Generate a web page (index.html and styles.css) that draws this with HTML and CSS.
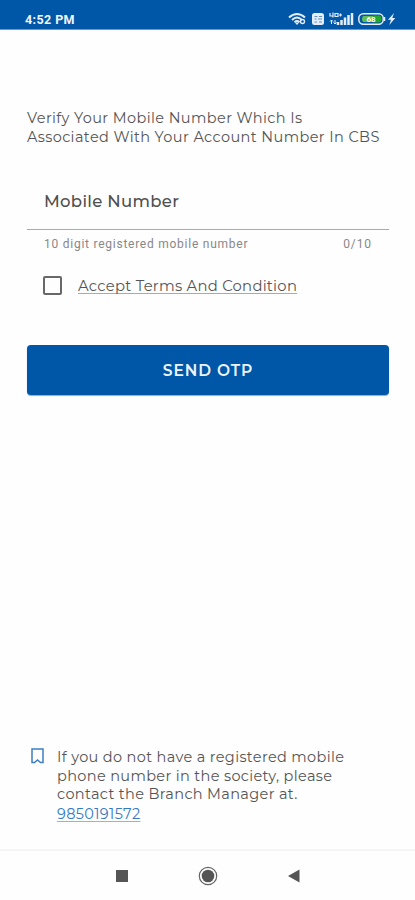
FILE: index.html
```html
<!DOCTYPE html>
<html lang="en">
<head>
<meta charset="utf-8">
<title>Verify Mobile Number</title>
<link rel="stylesheet" href="styles.css">
</head>
<body>
<header class="status">
  <span class="time">4:52 PM</span>
  <svg class="status-icons" width="110" height="16" viewBox="0 0 110 16" fill="none" stroke="#e4edf8">
    <path d="M1 6.500Q9-.5 17 6.500M4 9Q9 4 14 9M6.500 11.200Q9 9 11.500 11.200" stroke-width="1.900"/>
    <path d="M9 14l-2.200-2.500h4.400z" fill="#e4edf8" stroke="none"/>
    <circle cx="14.500" cy="10.500" r="2" stroke-width="1.300"/>
    <rect x="24" y="2" width="12" height="12" rx="2.500" fill="#e4edf8" stroke="none"/>
    <path d="M26.500 5.500h3M31 5.500h3M26.500 8h2M30 8h4M26.500 11h2.500M31 11h3" stroke="#5b8fc8" stroke-width="1.200"/>
    <path d="M42 2v3h3M45 1.500v5M47 2.500h3v3h-3zM51 4h3M52.500 2.500v3" stroke-width="1.200"/>
    <path d="M43.500 9v4M42 10.500l1.500-1.500 1.500 1.500M47 9v4M45.500 11.500l1.500 1.500 1.500-1.500" stroke-width="1"/>
    <path d="M50 14v-3M53.500 14V9M57 14V6.500M60.500 14V4M64 14V2" stroke-width="2.500"/>
    <rect x="70.800" y="2.800" width="24.400" height="10.400" rx="4.500" stroke-width="1.500"/>
    <path d="M76 5h9v6h-9q-2 0-2-3t2-3z" fill="#62bd57" stroke="none"/>
    <path d="M85 4.500h6q2.500 0 2.500 3.500T91 11.500h-6z" fill="#24a52c" stroke="none"/>
    <text x="78.500" y="11" class="battery">68</text>
    <path d="M96.500 6v4" stroke-width="1.500"/>
    <path d="M106 2l-6 6.700h3l-1.700 5.300 6-7h-3z" fill="#e4edf8" stroke="none"/>
  </svg>
</header>
<main>
  <h1 class="intro"><span>Verify Your Mobile Number Which Is</span><span>Associated With Your Account Number In CBS</span></h1>
  <div class="field"><span class="label">Mobile Number</span></div>
  <div class="helper"><span class="hint">10 digit registered mobile number</span><span class="count">0/10</span></div>
  <div class="terms"><span class="box"></span><a class="accept">Accept Terms And Condition</a></div>
  <button class="send"><span>SEND OTP</span></button>
</main>
<footer class="note">
  <svg width="13" height="16" viewBox="0 0 13 16" fill="none" stroke="#3c7fc3" stroke-width="1.500"><path d="M1 1h11v13.500H9.500L6.500 12l-3 2.500H1z"/></svg>
  <p><span>If you do not have a registered mobile</span><span>phone number in the society, please</span><span>contact the Branch Manager at.</span><a class="phone">9850191572</a></p>
</footer>
<nav class="nav">
  <svg width="20" height="20" viewBox="0 0 20 20"><path d="M4 4h12v12H4z" fill="#555"/></svg>
  <svg width="20" height="20" viewBox="0 0 20 20"><circle cx="10" cy="10" r="8.700" fill="none" stroke="#666" stroke-width="1.200"/><circle cx="10" cy="10" r="6.300" fill="#555"/></svg>
  <svg width="20" height="20" viewBox="0 0 20 20"><path d="M4 10l11.500-6.500v13z" fill="#555"/></svg>
</nav>
</body>
</html>
```
FILE: styles.css
```css
* { box-sizing: border-box; }
body { margin: 0; height: 900px; display: flex; flex-direction: column; background: #fefefe; color: #555; font-family: Montserrat, Inter, sans-serif; overflow: hidden; white-space: nowrap; }
.status { height: 30px; flex: none; background: #0057a8; border-bottom: 1px solid #6d98cc; display: flex; justify-content: space-between; padding: 11px 17px 0 25px; }
.time { color: #f0f5fc; font: 700 12.500px/17px Roboto, sans-serif; letter-spacing: .4px; }
.battery { font: 700 8px Roboto, sans-serif; fill: #fff; stroke: none; }
main { padding: 79px 26px 0 27px; flex: 1; }
.intro { margin: 0; font-size: 14.500px; line-height: 18.500px; font-weight: 400; letter-spacing: .4px; }
.intro span, .note p span, .phone { display: block; }
.field { height: 84px; border-bottom: 1px solid #aaa; padding: 45px 17px 0; }
.label { font-size: 16.500px; line-height: 20px; font-weight: 500; letter-spacing: .3px; color: #505050; }
.helper { display: flex; justify-content: space-between; padding: 5px 17px 0; font: 12px/18px Roboto, sans-serif; color: #888; }
.hint { letter-spacing: .75px; }
.count { letter-spacing: .9px; }
.terms { display: flex; align-items: center; gap: 16px; margin: 22px 0 0 16px; height: 20px; }
.box { width: 19px; height: 19px; border: 2px solid #686868; border-radius: 2px; }
.accept { padding-top: 1px; font-size: 14.800px; letter-spacing: .27px; text-decoration: underline; text-decoration-color: #aaa; text-underline-offset: 2px; text-decoration-skip-ink: none; }
.send { display: block; width: 100%; height: 50px; margin-top: 50px; padding: 0; border: 0; border-radius: 4px; background: #0057a8; color: #edf3fd; font: 600 15.500px/51px Montserrat, Inter, sans-serif; letter-spacing: .9px; box-shadow: 0 1px 1px #8daad0; }
.note { display: flex; gap: 13px; padding: 0 0 24px 31px; height: 101px; }
.note svg { flex: none; }
.note p { margin: 0; font-size: 14.500px; line-height: 18.500px; letter-spacing: .35px; }
.phone { width: max-content; margin-top: 1px; color: #3479c2; text-decoration: underline; text-decoration-color: #8db5dd; text-underline-offset: 2px; }
.nav { height: 51px; flex: none; border-top: 2px solid #f5f5f5; display: flex; justify-content: center; gap: 66px; padding-top: 15px; }
```
